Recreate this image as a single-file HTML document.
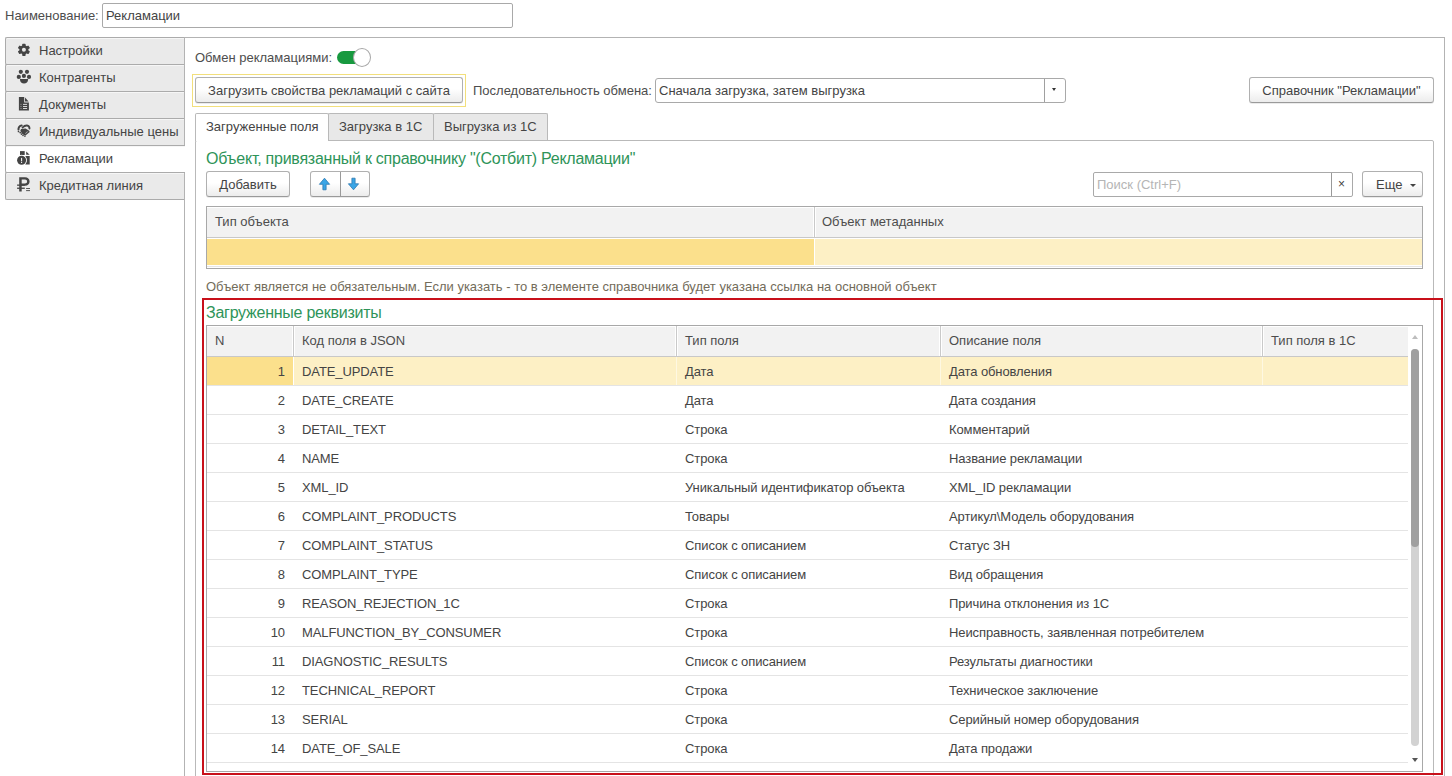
<!DOCTYPE html>
<html><head><meta charset="utf-8">
<style>
*{box-sizing:border-box;margin:0;padding:0}
html,body{width:1452px;height:776px;overflow:hidden;background:#fff}
body{font-family:"Liberation Sans",sans-serif;font-size:13px;color:#444;position:relative}
.a{position:absolute;white-space:nowrap}
.lbl{color:#4d4d4d}
.inp{position:absolute;border:1px solid #a9a9a9;border-radius:3px;background:#fff}
.side{position:absolute;left:5px;width:180px;height:28px;background:#eaeaea;box-shadow:inset 0 1px 0 #f6f6f6;border:1px solid #ababab;border-right:none;border-radius:2px 0 0 2px}
.side.act{background:#fff}
.side .t{position:absolute;left:33px;top:5px;color:#444}
.side svg{position:absolute;left:12px;top:5px}
.panel{position:absolute;left:184px;top:37px;width:1261px;height:760px;border:1px solid #b3b3b3}
.btn{position:absolute;border:1px solid #b0b0b0;border-bottom-color:#9a9a9a;border-radius:3px;background:linear-gradient(#fff 45%,#ececec);box-shadow:0 1px 0 rgba(0,0,0,.08);text-align:center;color:#444}
.tab{position:absolute;top:113px;height:27px;background:#e8e8e8;border:1px solid #b9b9b9;border-bottom:none;border-radius:2px 2px 0 0;color:#444}
.tab.act{background:#fff;border-bottom:none;height:28px;z-index:2}
.grp{color:#2e9459;font-size:16px;letter-spacing:-0.25px}
.tbl{position:absolute;border:1px solid #a8a8a8;background:#fff}
.hdr{position:absolute;top:0;height:31px;background:#f2f2f2;box-shadow:inset 0 1px 0 #fff;border-bottom:1px solid #c8c8c8}
.hc{position:absolute;top:0;height:30px;border-right:1px solid #c9c9c9;box-shadow:inset -1px 0 0 #fff,1px 0 0 #fff;color:#4d4d4d;padding-left:8px;line-height:30px}
.row{position:absolute;left:0;height:29px;border-bottom:1px solid #e4e4e4}
.c{position:absolute;top:0;height:28px;line-height:29px;padding-left:8px;color:#444;letter-spacing:-0.1px}
</style></head>
<body>
<!-- header line -->
<div class="a lbl" style="left:5px;top:8px">Наименование:</div>
<div class="inp" style="left:102px;top:3px;width:411px;height:25px;border-radius:2px"></div>
<div class="a" style="left:106px;top:8px">Рекламации</div>

<!-- sidebar -->
<div class="side" style="top:37px"><span class="t">Настройки</span><svg width="20" height="20" viewBox="0 0 20 20" fill="#444" style="position:absolute;left:8px;top:2px"><circle cx="9.9" cy="9.8" r="4.5"/><rect x="8.200000000000001" y="3.700000000000001" width="3.4" height="4" rx="0.7" transform="rotate(0 9.9 9.8)"/><rect x="8.200000000000001" y="3.700000000000001" width="3.4" height="4" rx="0.7" transform="rotate(60 9.9 9.8)"/><rect x="8.200000000000001" y="3.700000000000001" width="3.4" height="4" rx="0.7" transform="rotate(120 9.9 9.8)"/><rect x="8.200000000000001" y="3.700000000000001" width="3.4" height="4" rx="0.7" transform="rotate(180 9.9 9.8)"/><rect x="8.200000000000001" y="3.700000000000001" width="3.4" height="4" rx="0.7" transform="rotate(240 9.9 9.8)"/><rect x="8.200000000000001" y="3.700000000000001" width="3.4" height="4" rx="0.7" transform="rotate(300 9.9 9.8)"/><circle cx="9.9" cy="9.8" r="2" fill="#e8e8e8"/></svg></div>
<div class="side" style="top:64px"><span class="t">Контрагенты</span><svg width="20" height="20" viewBox="0 0 20 20" fill="#444" style="position:absolute;left:8px;top:2px"><circle cx="6.8" cy="4.8" r="2.1"/><circle cx="13" cy="4.8" r="2.1"/><circle cx="4.8" cy="9.9" r="2.1"/><circle cx="9.9" cy="8.9" r="2.1"/><circle cx="15" cy="9.9" r="2.1"/><path d="M6,12 H14.1 V12.6 C14.1,15.2 12.2,16.6 10,16.6 C7.8,16.6 6,15.2 6,12.6 Z"/></svg></div>
<div class="side" style="top:91px"><span class="t">Документы</span><svg width="20" height="20" viewBox="0 0 20 20" fill="#444" style="position:absolute;left:8px;top:2px"><path d="M4.9,3.1 H10.2 V8.4 H14.9 V16.5 H4.9 Z"/><path d="M11,3.6 V7.5 H14.6 Z"/><rect x="9" y="9.9" width="4.1" height="0.9" fill="#e8e8e8"/><rect x="9" y="12.1" width="4.1" height="0.9" fill="#e8e8e8"/><rect x="9" y="14" width="4.1" height="0.9" fill="#e8e8e8"/><rect x="6" y="9.9" width="2" height="0.9" fill="#777"/><rect x="6" y="12.1" width="2" height="0.9" fill="#777"/><rect x="6" y="14" width="2" height="0.9" fill="#777"/></svg></div>
<div class="side" style="top:118px"><span class="t">Индивидуальные цены</span><svg width="20" height="20" viewBox="0 0 20 20" fill="#444" style="position:absolute;left:8px;top:2px"><path d="M4.5,8.6 C4.2,6.4 5.6,4.7 7.7,4.5" fill="none" stroke="#444" stroke-width="2" stroke-linecap="round"/><path d="M8.6,6.5 C9.9,5 11.5,4.4 13,4.5 C14.6,4.7 15.5,5.9 15.5,7.5" fill="none" stroke="#444" stroke-width="1.9" stroke-linecap="round"/><path d="M7,8 L11.6,7.4 L15.2,9.7 L15.7,10.9 L13.6,12.7 L11.1,14.7 L8.2,12.7 L6.3,9.8 Z"/><path d="M12,11.6 L14.2,10.4 M11,12.6 L12.8,11.6" stroke="#d8d8d8" stroke-width="0.5"/><circle cx="4.5" cy="10.5" r="0.85"/><circle cx="6.2" cy="11.6" r="0.85"/><circle cx="7.5" cy="13.1" r="0.85"/><circle cx="9" cy="14.3" r="0.85"/><circle cx="10.9" cy="15.3" r="0.8"/></svg></div>
<div class="side" style="top:172px"><span class="t">Кредитная линия</span><svg width="20" height="20" viewBox="0 0 20 20" fill="#444" style="position:absolute;left:8px;top:2px"><path fill-rule="evenodd" d="M5.2,2.3 H11 C13.8,2.3 15.6,4 15.6,6.5 C15.6,9 13.8,10.7 11,10.7 H7.7 V16.5 H5.2 Z M7.7,4.6 V8.5 H11 C12.4,8.5 13.1,7.7 13.1,6.5 C13.1,5.4 12.4,4.6 11,4.6 Z"/><rect x="3.1" y="9.5" width="7.7" height="1.3"/><rect x="3.1" y="12.6" width="7.7" height="1.3"/><rect x="12.1" y="13.1" width="3.9" height="0.9"/><rect x="12.1" y="15.2" width="3.9" height="0.9"/></svg></div>

<!-- main panel -->
<div class="panel"></div>
<div class="a" style="left:184px;top:146px;width:1px;height:26px;background:#fff;z-index:3"></div><div class="side act" style="top:145px;width:180px;z-index:3"><span class="t">Рекламации</span><svg width="20" height="20" viewBox="0 0 20 20" fill="#444" style="position:absolute;left:8px;top:2px"><path d="M6,3.1 H10.7 V7 H6 Z"/><path d="M12.2,3.5 V6.8 H15.7 Z"/><path d="M11.3,8 H15.7 V16.5 H11.3 Z"/><circle cx="7.6" cy="12.2" r="5.4" fill="#fff"/><circle cx="7.6" cy="12.2" r="4.5"/><rect x="7.1" y="9.9" width="1" height="3.4" fill="#fff"/><rect x="7.1" y="13.9" width="1" height="1.1" fill="#fff"/></svg></div>


<!-- top row -->
<div class="a lbl" style="left:195px;top:50px">Обмен рекламациями:</div>
<div class="a" style="left:337px;top:51px;width:24px;height:13px;background:#17993f;border-radius:7px"></div>
<div class="a" style="left:353px;top:48px;width:18px;height:19px;background:#fff;border:1px solid #a8a8a8;border-radius:50%"></div>

<div class="a" style="left:192px;top:74px;width:274px;height:33px;border:1px solid #f2df7c"></div>
<div class="btn" style="left:195px;top:77px;width:268px;height:26px;line-height:25px">Загрузить свойства рекламаций с сайта</div>

<div class="a lbl" style="left:473px;top:83px">Последовательность обмена:</div>
<div class="inp" style="left:655px;top:78px;width:411px;height:25px"></div>
<div class="a" style="left:659px;top:83px">Сначала загрузка, затем выгрузка</div>
<div class="a" style="left:1044px;top:79px;width:1px;height:23px;background:#a0a0a0"></div>
<div class="a" style="left:1052px;top:88px;width:0;height:0;border-left:2.5px solid transparent;border-right:2.5px solid transparent;border-top:3px solid #333"></div>

<div class="btn" style="left:1249px;top:77px;width:185px;height:26px;line-height:25px">Справочник "Рекламации"</div>

<!-- tabs -->
<div class="a" style="left:195px;top:140px;width:1239px;height:660px;border:1px solid #b9b9b9;border-radius:2px"></div>
<div class="tab act" style="left:195px;width:134px;line-height:26px;padding-left:10px">Загруженные поля</div>
<div class="tab" style="left:328px;width:106px;line-height:25px;padding-left:10px">Загрузка в 1С</div>
<div class="tab" style="left:433px;width:115px;line-height:25px;padding-left:10px">Выгрузка из 1С</div>

<div class="a grp" style="left:206px;top:150px">Объект, привязанный к справочнику "(Сотбит) Рекламации"</div>

<div class="btn" style="left:206px;top:171px;width:84px;height:26px;line-height:25px">Добавить</div>
<div class="btn" style="left:310px;top:171px;width:60px;height:26px"></div>
<div class="a" style="left:340px;top:172px;width:1px;height:24px;background:#9a9a9a"></div>
<svg class="a" style="left:310px;top:171px" width="60" height="26" viewBox="0 0 60 26"><path d="M14.5,7.2 L19.6,13.3 H16.1 V18.8 H12.9 V13.3 H9.4 Z" fill="#3aa5e6" stroke="#2b77b0" stroke-width="0.8" stroke-linejoin="round"/><path d="M41.9,7.2 H45.1 V12.8 H48.6 L43.5,18.8 L38.4,12.8 H41.9 Z" fill="#3aa5e6" stroke="#2b77b0" stroke-width="0.8" stroke-linejoin="round"/></svg>

<div class="inp" style="left:1093px;top:172px;width:260px;height:25px;border-radius:2px"></div>
<div class="a" style="left:1097px;top:177px;color:#b5b5b5">Поиск (Ctrl+F)</div>
<div class="a" style="left:1331px;top:173px;width:1px;height:23px;background:#999"></div>
<div class="a" style="left:1338px;top:177px;color:#444;font-size:12px">×</div>
<div class="btn" style="left:1362px;top:171px;width:61px;height:26px;line-height:25px;text-align:left;padding-left:13px">Еще</div>
<div class="a" style="left:1410px;top:184px;width:0;height:0;border-left:3px solid transparent;border-right:3px solid transparent;border-top:3px solid #444"></div>

<!-- table 1 -->
<div class="tbl" style="left:206px;top:206px;width:1217px;height:63px">
  <div class="hdr" style="left:0;width:1215px"></div>
  <div class="hc" style="left:0;width:608px">Тип объекта</div>
  <div class="hc" style="left:607px;width:607px;border-right:none;box-shadow:none">Объект метаданных</div>
  <div class="a" style="left:0;top:32px;width:607px;height:26px;background:#fbe08c"></div>
  <div class="a" style="left:608px;top:32px;width:607px;height:26px;background:#fdf0c5"></div>
  <div class="a" style="left:0;top:59px;width:1215px;height:1px;background:#e6e6e6"></div>
</div>

<div class="a" style="left:206px;top:279px;color:#736c5a">Объект является не обязательным. Если указать - то в элементе справочника будет указана ссылка на основной объект</div>

<!-- red frame -->
<div class="a" style="left:202px;top:298px;width:1241px;height:477px;border:2px solid #c8101a;z-index:5"></div>
<div class="a grp" style="left:206px;top:304px">Загруженные реквизиты</div>

<!-- table 2 -->
<div class="tbl" id="t2" style="left:206px;top:325px;width:1217px;height:447px;overflow:hidden">
  <div class="hdr" style="left:0;width:1201px"></div>
  <div class="hc" style="left:0;width:87px">N</div>
  <div class="hc" style="left:87px;width:383px">Код поля в JSON</div>
  <div class="hc" style="left:470px;width:264px">Тип поля</div>
  <div class="hc" style="left:734px;width:322px">Описание поля</div>
  <div class="hc" style="left:1056px;width:145px;border-right:none;box-shadow:none">Тип поля в 1С</div>
  <div class="a" style="left:0;top:31px;width:86px;height:28px;background:#fbe08c"></div>
  <div class="a" style="left:87px;top:31px;width:1114px;height:28px;background:#fdf0c5"></div><div class="a" style="left:469px;top:31px;width:1px;height:28px;background:#fef8e2"></div><div class="a" style="left:733px;top:31px;width:1px;height:28px;background:#fef8e2"></div><div class="a" style="left:1055px;top:31px;width:1px;height:28px;background:#fef8e2"></div>
  <div class="row" style="top:30px;width:1201px;height:30px"></div>
  <div class="c" style="top:31px;left:0;width:78px;text-align:right;padding:0">1</div>
  <div class="c" style="top:31px;left:87px">DATE_UPDATE</div>
  <div class="c" style="top:31px;left:470px">Дата</div>
  <div class="c" style="top:31px;left:734px">Дата обновления</div>
  <div class="row" style="top:59px;width:1201px;height:30px"></div>
  <div class="c" style="top:60px;left:0;width:78px;text-align:right;padding:0">2</div>
  <div class="c" style="top:60px;left:87px">DATE_CREATE</div>
  <div class="c" style="top:60px;left:470px">Дата</div>
  <div class="c" style="top:60px;left:734px">Дата создания</div>
  <div class="row" style="top:88px;width:1201px;height:30px"></div>
  <div class="c" style="top:89px;left:0;width:78px;text-align:right;padding:0">3</div>
  <div class="c" style="top:89px;left:87px">DETAIL_TEXT</div>
  <div class="c" style="top:89px;left:470px">Строка</div>
  <div class="c" style="top:89px;left:734px">Комментарий</div>
  <div class="row" style="top:117px;width:1201px;height:30px"></div>
  <div class="c" style="top:118px;left:0;width:78px;text-align:right;padding:0">4</div>
  <div class="c" style="top:118px;left:87px">NAME</div>
  <div class="c" style="top:118px;left:470px">Строка</div>
  <div class="c" style="top:118px;left:734px">Название рекламации</div>
  <div class="row" style="top:146px;width:1201px;height:30px"></div>
  <div class="c" style="top:147px;left:0;width:78px;text-align:right;padding:0">5</div>
  <div class="c" style="top:147px;left:87px">XML_ID</div>
  <div class="c" style="top:147px;left:470px">Уникальный идентификатор объекта</div>
  <div class="c" style="top:147px;left:734px">XML_ID рекламации</div>
  <div class="row" style="top:175px;width:1201px;height:30px"></div>
  <div class="c" style="top:176px;left:0;width:78px;text-align:right;padding:0">6</div>
  <div class="c" style="top:176px;left:87px">COMPLAINT_PRODUCTS</div>
  <div class="c" style="top:176px;left:470px">Товары</div>
  <div class="c" style="top:176px;left:734px">Артикул\Модель оборудования</div>
  <div class="row" style="top:204px;width:1201px;height:30px"></div>
  <div class="c" style="top:205px;left:0;width:78px;text-align:right;padding:0">7</div>
  <div class="c" style="top:205px;left:87px">COMPLAINT_STATUS</div>
  <div class="c" style="top:205px;left:470px">Список с описанием</div>
  <div class="c" style="top:205px;left:734px">Статус ЗН</div>
  <div class="row" style="top:233px;width:1201px;height:30px"></div>
  <div class="c" style="top:234px;left:0;width:78px;text-align:right;padding:0">8</div>
  <div class="c" style="top:234px;left:87px">COMPLAINT_TYPE</div>
  <div class="c" style="top:234px;left:470px">Список с описанием</div>
  <div class="c" style="top:234px;left:734px">Вид обращения</div>
  <div class="row" style="top:262px;width:1201px;height:30px"></div>
  <div class="c" style="top:263px;left:0;width:78px;text-align:right;padding:0">9</div>
  <div class="c" style="top:263px;left:87px">REASON_REJECTION_1C</div>
  <div class="c" style="top:263px;left:470px">Строка</div>
  <div class="c" style="top:263px;left:734px">Причина отклонения из 1С</div>
  <div class="row" style="top:291px;width:1201px;height:30px"></div>
  <div class="c" style="top:292px;left:0;width:78px;text-align:right;padding:0">10</div>
  <div class="c" style="top:292px;left:87px">MALFUNCTION_BY_CONSUMER</div>
  <div class="c" style="top:292px;left:470px">Строка</div>
  <div class="c" style="top:292px;left:734px">Неисправность, заявленная потребителем</div>
  <div class="row" style="top:320px;width:1201px;height:30px"></div>
  <div class="c" style="top:321px;left:0;width:78px;text-align:right;padding:0">11</div>
  <div class="c" style="top:321px;left:87px">DIAGNOSTIC_RESULTS</div>
  <div class="c" style="top:321px;left:470px">Список с описанием</div>
  <div class="c" style="top:321px;left:734px">Результаты диагностики</div>
  <div class="row" style="top:349px;width:1201px;height:30px"></div>
  <div class="c" style="top:350px;left:0;width:78px;text-align:right;padding:0">12</div>
  <div class="c" style="top:350px;left:87px">TECHNICAL_REPORT</div>
  <div class="c" style="top:350px;left:470px">Строка</div>
  <div class="c" style="top:350px;left:734px">Техническое заключение</div>
  <div class="row" style="top:378px;width:1201px;height:30px"></div>
  <div class="c" style="top:379px;left:0;width:78px;text-align:right;padding:0">13</div>
  <div class="c" style="top:379px;left:87px">SERIAL</div>
  <div class="c" style="top:379px;left:470px">Строка</div>
  <div class="c" style="top:379px;left:734px">Серийный номер оборудования</div>
  <div class="row" style="top:407px;width:1201px;height:30px"></div>
  <div class="c" style="top:408px;left:0;width:78px;text-align:right;padding:0">14</div>
  <div class="c" style="top:408px;left:87px">DATE_OF_SALE</div>
  <div class="c" style="top:408px;left:470px">Строка</div>
  <div class="c" style="top:408px;left:734px">Дата продажи</div>
  <div class="row" style="top:436px;width:1201px;height:30px"></div>
  <div class="c" style="top:437px;left:0;width:78px;text-align:right;padding:0"></div>
  <div class="c" style="top:437px;left:87px"></div>
  <div class="c" style="top:437px;left:470px"></div>
  <div class="c" style="top:437px;left:734px"></div>
  <div class="a" style="left:1205px;top:9px;width:0;height:0;border-left:3px solid transparent;border-right:3px solid transparent;border-bottom:4px solid #bdbdbd"></div>
  <div class="a" style="left:1204px;top:23px;width:8px;height:397px;background:#d2d2d2;border-radius:4px"></div>
  <div class="a" style="left:1204px;top:23px;width:8px;height:198px;background:#a0a0a0;border-radius:4px"></div>
  <div class="a" style="left:1205px;top:432px;width:0;height:0;border-left:3px solid transparent;border-right:3px solid transparent;border-top:4px solid #555"></div></div>

</body></html>
